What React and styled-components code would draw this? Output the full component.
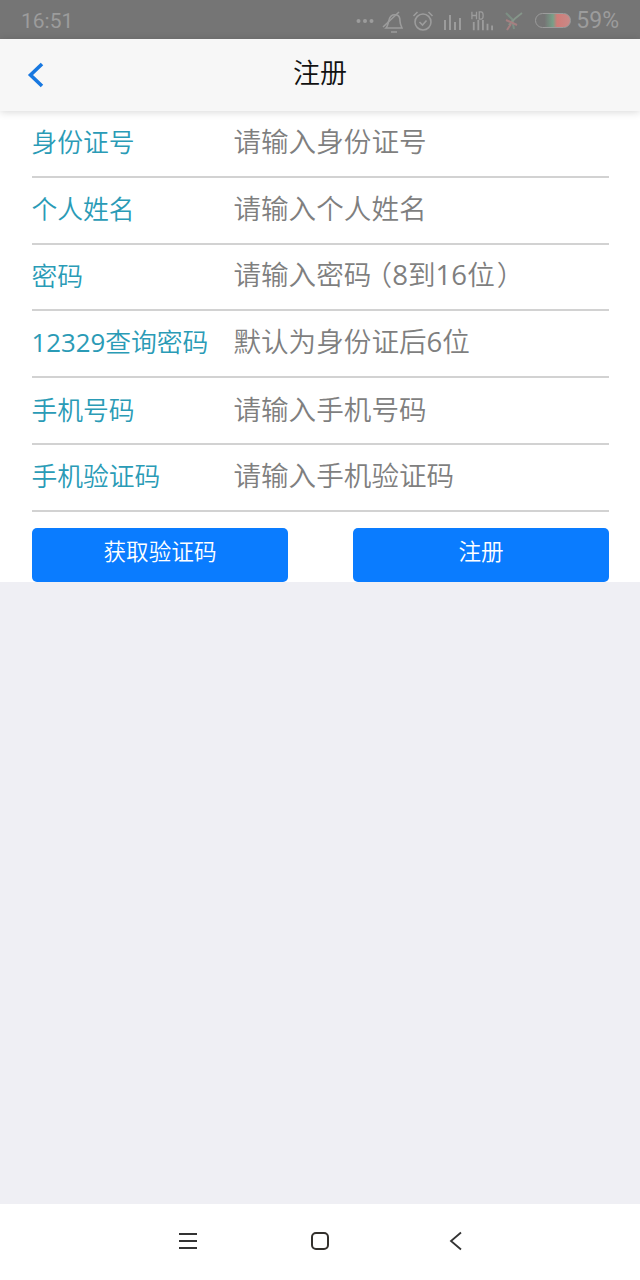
import React from 'react'
import styled, { createGlobalStyle } from 'styled-components'

const CJK = `"Noto Sans CJK SC", "Noto Sans", sans-serif`

const GlobalStyle = createGlobalStyle`
  html, body {
    margin: 0;
    padding: 0;
    background: #efeff4;
  }
  * {
    box-sizing: border-box;
  }
`

const Screen = styled.div`
  display: flex;
  flex-direction: column;
  width: 640px;
  height: 1280px;
  overflow: hidden;
  background: #efeff4;
  font-family: ${CJK};
`

const StatusBar = styled.div`
  display: flex;
  align-items: center;
  justify-content: space-between;
  height: 39px;
  padding: 2px 21px 0;
  background: #757575;
  color: #9c9c9c;
  font-family: "Roboto", sans-serif;
  font-size: 21px;
`

const StatusIcons = styled.div`
  display: flex;
  align-items: center;
  gap: 8px;
`

const Battery = styled.span`
  display: block;
  width: 36px;
  height: 15px;
  margin-left: 4px;
  border: 1.5px solid #9c9c9c;
  border-radius: 8px;
  background: linear-gradient(90deg, transparent 0 25%, #78a088 50%, #d07c78 62%, #c88a88 100%);
`

const Percent = styled.span`
  margin-left: -3px;
  font-size: 23px;
`

const Header = styled.header`
  position: relative;
  z-index: 1;
  display: flex;
  align-items: center;
  justify-content: center;
  height: 72px;
  background: #f7f7f7;
  box-shadow: 0 1px 8px rgba(0, 0, 0, 0.16);
`

const BackButton = styled.button`
  position: absolute;
  left: 26px;
  top: 22px;
  display: flex;
  padding: 0;
  border: 0;
  background: none;
`

const Title = styled.h1`
  margin: 0 0 8px;
  color: #111;
  font-size: 27px;
  font-weight: 350;
  line-height: 1;
`

const Form = styled.main`
  padding: 0 31px 0 32px;
  background: #fff;
`

const Row = styled.div`
  display: flex;
  align-items: center;
  height: 66.8px;
  padding-bottom: 6px;
  border-bottom: 2px solid #d2d2d2;
`

const Label = styled.label`
  width: 202px;
  flex: none;
  margin: 2px 0 0 -0.6px;
  color: #2a9bb6;
  font-size: 25.8px;
  font-weight: 350;
  line-height: 38px;
  white-space: nowrap;
`

const Hint = styled.span`
  color: #7f7f7f;
  font-size: 27.6px;
  font-weight: 350;
  line-height: 38px;
  white-space: nowrap;
`

const Digits = styled.span`
  font-family: "Open Sans", sans-serif;
  font-weight: 400;
`

// half-width forms of the full-width brackets, spaced out by hand
const OpenParen = styled.span`
  margin-left: 7px;
  font-feature-settings: "halt";
`

const CloseParen = styled.span`
  margin-left: 2px;
  font-feature-settings: "halt";
`

const Actions = styled.div`
  display: flex;
  justify-content: space-between;
  padding-top: 16px;
`

const ActionButton = styled.button`
  width: 256px;
  height: 54px;
  padding: 0 0 8px;
  border: 0;
  border-radius: 5px;
  background: #0a7cff;
  color: #fff;
  font-family: ${CJK};
  font-size: 22.6px;
  font-weight: 350;
`

const Spacer = styled.div`
  flex: 1;
`

const NavBar = styled.nav`
  display: grid;
  grid-template-columns: 132px 132px 140px;
  align-items: center;
  height: 76px;
  padding: 0 0 3px 122px;
  background: #fff;
`

const NavSlot = styled.div`
  display: flex;
  justify-content: center;
`

const FIELDS = [
  { id: 'idcard', label: '身份证号', hint: '请输入身份证号' },
  { id: 'name', label: '个人姓名', hint: '请输入个人姓名' },
  {
    id: 'password',
    label: '密码',
    hint: <>请输入密码<OpenParen>（</OpenParen><Digits>8</Digits>到<Digits>16</Digits>位<CloseParen>）</CloseParen></>,
  },
  {
    id: 'query',
    label: <><Digits>12329</Digits>查询密码</>,
    hint: <>默认为身份证后<Digits>6</Digits>位</>,
  },
  { id: 'phone', label: '手机号码', hint: '请输入手机号码' },
  { id: 'sms', label: '手机验证码', hint: '请输入手机验证码' },
]

const STATUS = '#9c9c9c'

const MutedBell = () => (
  <svg width="21" height="24" viewBox="3 0 21 24" fill="none" stroke={STATUS} strokeWidth="1.6">
    <path d="M7 19c2-2 2-5 3-8 1-4 4-6 8-5 3 1 3 4 3 6 0 3 1 5 2 7z" />
    <path d="M12 23h6M4 18L20 3" />
  </svg>
)

const Alarm = () => (
  <svg width="24" height="24" viewBox="0 0 24 24" fill="none" stroke={STATUS} strokeWidth="1.6">
    <circle cx="12" cy="13" r="8" />
    <path d="M8.500 13l3 3 4-4.500M2.500 7l4-4M21.500 7l-4-4" />
  </svg>
)

const Signal = ({ bars }) => (
  <svg width={bars.length * 5} height="20" viewBox={`0 0 ${bars.length * 5} 20`} stroke={STATUS} strokeWidth="2">
    {bars.map((h, i) => (
      <line key={i} x1={i * 5 + 2} x2={i * 5 + 2} y1={19} y2={19 - h} />
    ))}
  </svg>
)

const HdSignal = () => (
  <svg width="22" height="24" viewBox="0 0 24 24" stroke={STATUS}>
    <path d="M1 2v8M6 2v8M1 6h5M9 2v8h2c3 0 3-8 0-8z" fill="none" strokeWidth="1.4" />
    <path d="M3 13v9M8 11v11M13 11v11M18 15v7M23 17v5" strokeWidth="2" />
  </svg>
)

const Plane = () => (
  <svg width="22" height="22" viewBox="0 0 22 22" fill="none" strokeWidth="2">
    <path d="M5 3l6 6 2 10" stroke="#7d8f84" />
    <path d="M21 3c-3 2-9 7-13 12" stroke="#86968a" />
    <path d="M5 10l11 5M6 20l4-6" stroke="#a57f80" />
  </svg>
)

const BackChevron = () => (
  <svg width="20" height="28" viewBox="0 0 20 28" fill="none" stroke="#1878e0" strokeWidth="3.600">
    <path d="M16 3L4.500 14 16 25" />
  </svg>
)

const MenuIcon = () => (
  <svg width="20" height="18" viewBox="0 0 20 18" fill="none" stroke="#333" strokeWidth="2">
    <path d="M1 2h18M1 9h18M1 16h18" />
  </svg>
)

const HomeIcon = () => (
  <svg width="20" height="20" viewBox="0 0 20 20" fill="none" stroke="#33302c" strokeWidth="2">
    <rect x="2" y="2" width="16" height="16" rx="4" />
  </svg>
)

const BackIcon = () => (
  <svg width="14" height="20" viewBox="0 0 14 20" fill="none" stroke="#333" strokeWidth="1.800">
    <path d="M12 1.500L2 10l10 8.500" />
  </svg>
)

export default function App() {
  return (
    <Screen>
      <GlobalStyle />
      <StatusBar>
        <span>16:51</span>
        <StatusIcons>
          <svg width="18" height="6" viewBox="0 0 18 6" fill={STATUS}>
            <circle cx="2.500" cy="3" r="2" />
            <circle cx="9" cy="3" r="2" />
            <circle cx="15.500" cy="3" r="2" />
          </svg>
          <MutedBell />
          <Alarm />
          <Signal bars={[10, 15, 8, 12]} />
          <HdSignal />
          <Plane />
          <Battery />
          <Percent>59%</Percent>
        </StatusIcons>
      </StatusBar>
      <Header>
        <BackButton aria-label="返回">
          <BackChevron />
        </BackButton>
        <Title>注册</Title>
      </Header>
      <Form>
        {FIELDS.map(field => (
          <Row key={field.id}>
            <Label>{field.label}</Label>
            <Hint>{field.hint}</Hint>
          </Row>
        ))}
        <Actions>
          <ActionButton>获取验证码</ActionButton>
          <ActionButton>注册</ActionButton>
        </Actions>
      </Form>
      <Spacer />
      <NavBar>
        <NavSlot><MenuIcon /></NavSlot>
        <NavSlot><HomeIcon /></NavSlot>
        <NavSlot><BackIcon /></NavSlot>
      </NavBar>
    </Screen>
  )
}
